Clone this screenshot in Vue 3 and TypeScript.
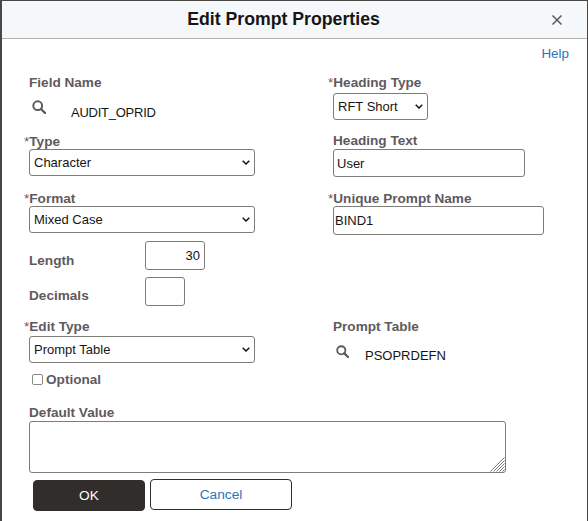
<script setup lang="ts">
const typeOptions: string[] = ['Character']
const formatOptions: string[] = ['Mixed Case']
const editOptions: string[] = ['Prompt Table']
const headingOptions: string[] = ['RFT Short']
const gripLines: string[] = [
  'M14.5 .5 L.5 14.5',
  'M14.5 3.5 L3.5 14.5',
  'M14.5 6.5 L6.5 14.5',
  'M14.5 9.5 L9.5 14.5',
  'M14.5 12.5 L12.5 14.5',
]
</script>

<template>
  <div class="dialog">
    <header class="head">
      <h1 class="title">Edit Prompt Properties</h1>
      <button class="close" type="button" aria-label="Close">
        <svg width="12" height="12" viewBox="0 0 12 12"><path d="M1.5 1.5 L10.5 10.5 M10.5 1.5 L1.5 10.5" stroke="#5f5a57" stroke-width="1.5" fill="none" /></svg>
      </button>
    </header>
    <main class="content">
      <div class="help-row"><a class="help" href="#">Help</a></div>
      <div class="columns">
        <section class="col">
          <div class="label">Field Name</div>
          <div class="lookup">
            <svg class="glass" width="14" height="14" viewBox="0 0 14 14"><circle cx="5.7" cy="5.7" r="4.4" fill="none" stroke="#5f5a57" stroke-width="2" /><path d="M9 9 L13 13" stroke="#5f5a57" stroke-width="2.4" stroke-linecap="round" /></svg>
            <span class="value tight">AUDIT_OPRID</span>
          </div>
          <div class="label l-type"><span class="star">*</span>Type</div>
          <select class="ctl sel wide"><option v-for="o in typeOptions" :key="o">{{ o }}</option></select>
          <div class="label l-format"><span class="star">*</span>Format</div>
          <select class="ctl sel wide"><option v-for="o in formatOptions" :key="o">{{ o }}</option></select>
          <div class="inline r-length">
            <span class="label inline-label">Length</span>
            <input class="ctl num len" value="30" />
          </div>
          <div class="inline r-dec">
            <span class="label inline-label">Decimals</span>
            <input class="ctl num dec" />
          </div>
          <div class="label l-edit"><span class="star">*</span>Edit Type</div>
          <select class="ctl sel wide edit-sel"><option v-for="o in editOptions" :key="o">{{ o }}</option></select>
          <label class="opt"><input type="checkbox" class="check" /><span class="label">Optional</span></label>
        </section>
        <section class="col">
          <div class="label"><span class="star">*</span>Heading Type</div>
          <select class="ctl sel short"><option v-for="o in headingOptions" :key="o">{{ o }}</option></select>
          <div class="label l-htext">Heading Text</div>
          <input class="ctl text htext" value="User" />
          <div class="label l-unique"><span class="star">*</span>Unique Prompt Name</div>
          <input class="ctl text unique" value="BIND1" />
          <div class="label l-ptable">Prompt Table</div>
          <div class="lookup small">
            <svg class="glass" width="13" height="13" viewBox="0 0 14 14"><circle cx="5.7" cy="5.7" r="4.4" fill="none" stroke="#5f5a57" stroke-width="2" /><path d="M9 9 L13 13" stroke="#5f5a57" stroke-width="2.4" stroke-linecap="round" /></svg>
            <span class="value">PSOPRDEFN</span>
          </div>
        </section>
      </div>
      <div class="label l-default">Default Value</div>
      <div class="area-wrap">
        <textarea class="ctl area"></textarea>
        <svg class="grip" width="15" height="15" viewBox="0 0 15 15">
          <path v-for="d in gripLines" :key="d" :d="d" stroke="#7f7b76" stroke-width="1" fill="none" />
        </svg>
      </div>
      <div class="actions">
        <button class="btn ok" type="button">OK</button>
        <button class="btn cancel" type="button">Cancel</button>
      </div>
    </main>
  </div>
</template>

<style>
html, body { margin: 0; background: #fff; }
</style>

<style scoped>
.dialog {
  box-sizing: border-box;
  width: 588px;
  height: 521px;
  border-style: solid;
  border-color: #4a4643;
  border-width: 1px 1px 0 2px;
  background: #fff;
  font-family: "Liberation Sans", Arial, sans-serif;
  overflow: hidden;
}
.head {
  height: 37px;
  background: #f4f8fa;
  border-bottom: 1px solid #b5b2ad;
  display: flex;
  align-items: center;
  justify-content: center;
  padding-right: 22px;
  position: relative;
}
.title {
  margin: 0;
  font-size: 17.7px;
  font-weight: 700;
  color: #161513;
  line-height: 37px;
}
.close {
  position: absolute;
  right: 24px;
  top: 13px;
  width: 12px;
  height: 12px;
  padding: 0;
  border: 0;
  background: none;
  display: flex;
}
.content { padding: 7px 18px 0 27px; }
.help-row { display: flex; justify-content: flex-end; height: 16px; }
.help { color: #2a74bc; font-size: 13.4px; line-height: 16px; text-decoration: none; }
.columns { display: grid; grid-template-columns: 304px 1fr; margin-top: 12px; }
.col { display: flex; flex-direction: column; align-items: flex-start; }
.label {
  font-size: 13.6px;
  line-height: 18px;
  margin-bottom: -2px;
  font-weight: 700;
  color: #5f5a5e;
  white-space: nowrap;
}
.star { margin-left: -5px; font-weight: 400; }
.lookup { display: flex; margin-top: 10px; height: 24px; padding-left: 3px; }
.lookup.small { margin-top: 11px; }
.glass { flex: none; }
.value {
  font-size: 13px;
  line-height: 16px;
  color: #161513;
  margin-left: 25px;
  margin-top: 5px;
}
.tight { letter-spacing: -0.25px; }
.small .value { margin-left: 16px; margin-top: 3px; }
.ctl {
  box-sizing: border-box;
  border: 1px solid #7f7b76;
  border-radius: 3px;
  background: #fff;
  font-family: "Liberation Sans", Arial, sans-serif;
  font-size: 13px;
  color: #161513;
  outline: none;
  margin: 0;
}
.sel {
  height: 27px;
  padding: 0 0 0 4px;
  appearance: none;
  background-image: url("data:image/svg+xml,%3Csvg xmlns='http://www.w3.org/2000/svg' width='8' height='5' viewBox='0 0 8 5'%3E%3Cpath d='M.7.7 4 4 7.3.7' fill='none' stroke='%23161513' stroke-width='1.5'/%3E%3C/svg%3E");
  background-repeat: no-repeat;
  background-position: right 4px center;
}
.wide { width: 226px; }
.short { width: 95px; margin-top: 3px; }
.edit-sel { margin-top: 2px; }
.text { padding: 0 3px; }
.l-type { margin-top: 9px; }
.l-format { margin-top: 14px; }
.inline { display: flex; align-items: center; width: 100%; }
.inline-label { width: 116px; }
.r-length { margin-top: 8px; }
.r-length .label { margin-top: 9px; }
.r-dec { margin-top: 7px; }
.r-dec .label { margin-top: 7px; }
.num { text-align: right; height: 29px; padding: 0 4px; }
.len { width: 60px; }
.dec { width: 40px; }
.l-edit { margin-top: 12px; }
.opt { display: flex; align-items: center; margin-top: 8px; height: 16px; padding-left: 3px; }
.check {
  appearance: none;
  box-sizing: border-box;
  width: 11px;
  height: 11px;
  margin: 0 3px 0 0;
  border: 1px solid #8a8a8a;
  border-radius: 2px;
  background: #fff;
}
.l-htext { margin-top: 12px; }
.htext { width: 192px; height: 28px; margin-top: 1px; }
.unique { width: 211px; height: 29px; padding-left: 1px; }
.l-unique { margin-top: 13px; }
.l-ptable { margin-top: 83px; }
.l-default { margin-top: 17px; }
.area-wrap { position: relative; width: 477px; height: 52px; margin-top: 1px; }
.area { display: block; width: 477px; height: 52px; resize: none; }
.grip { position: absolute; right: 1px; bottom: 1px; pointer-events: none; }
.actions { display: flex; align-items: flex-start; gap: 5px; margin: 6px 0 0 4px; }
.btn { box-sizing: border-box; font-family: inherit; font-size: 13.7px; border-radius: 4px; padding: 0; }
.ok { width: 112px; height: 31px; background: #312d2a; border: 1px solid #312d2a; color: #fff; margin-top: 1px; }
.cancel { width: 142px; height: 31px; background: #fff; border: 1px solid #312d2a; color: #2a74bc; }
</style>
